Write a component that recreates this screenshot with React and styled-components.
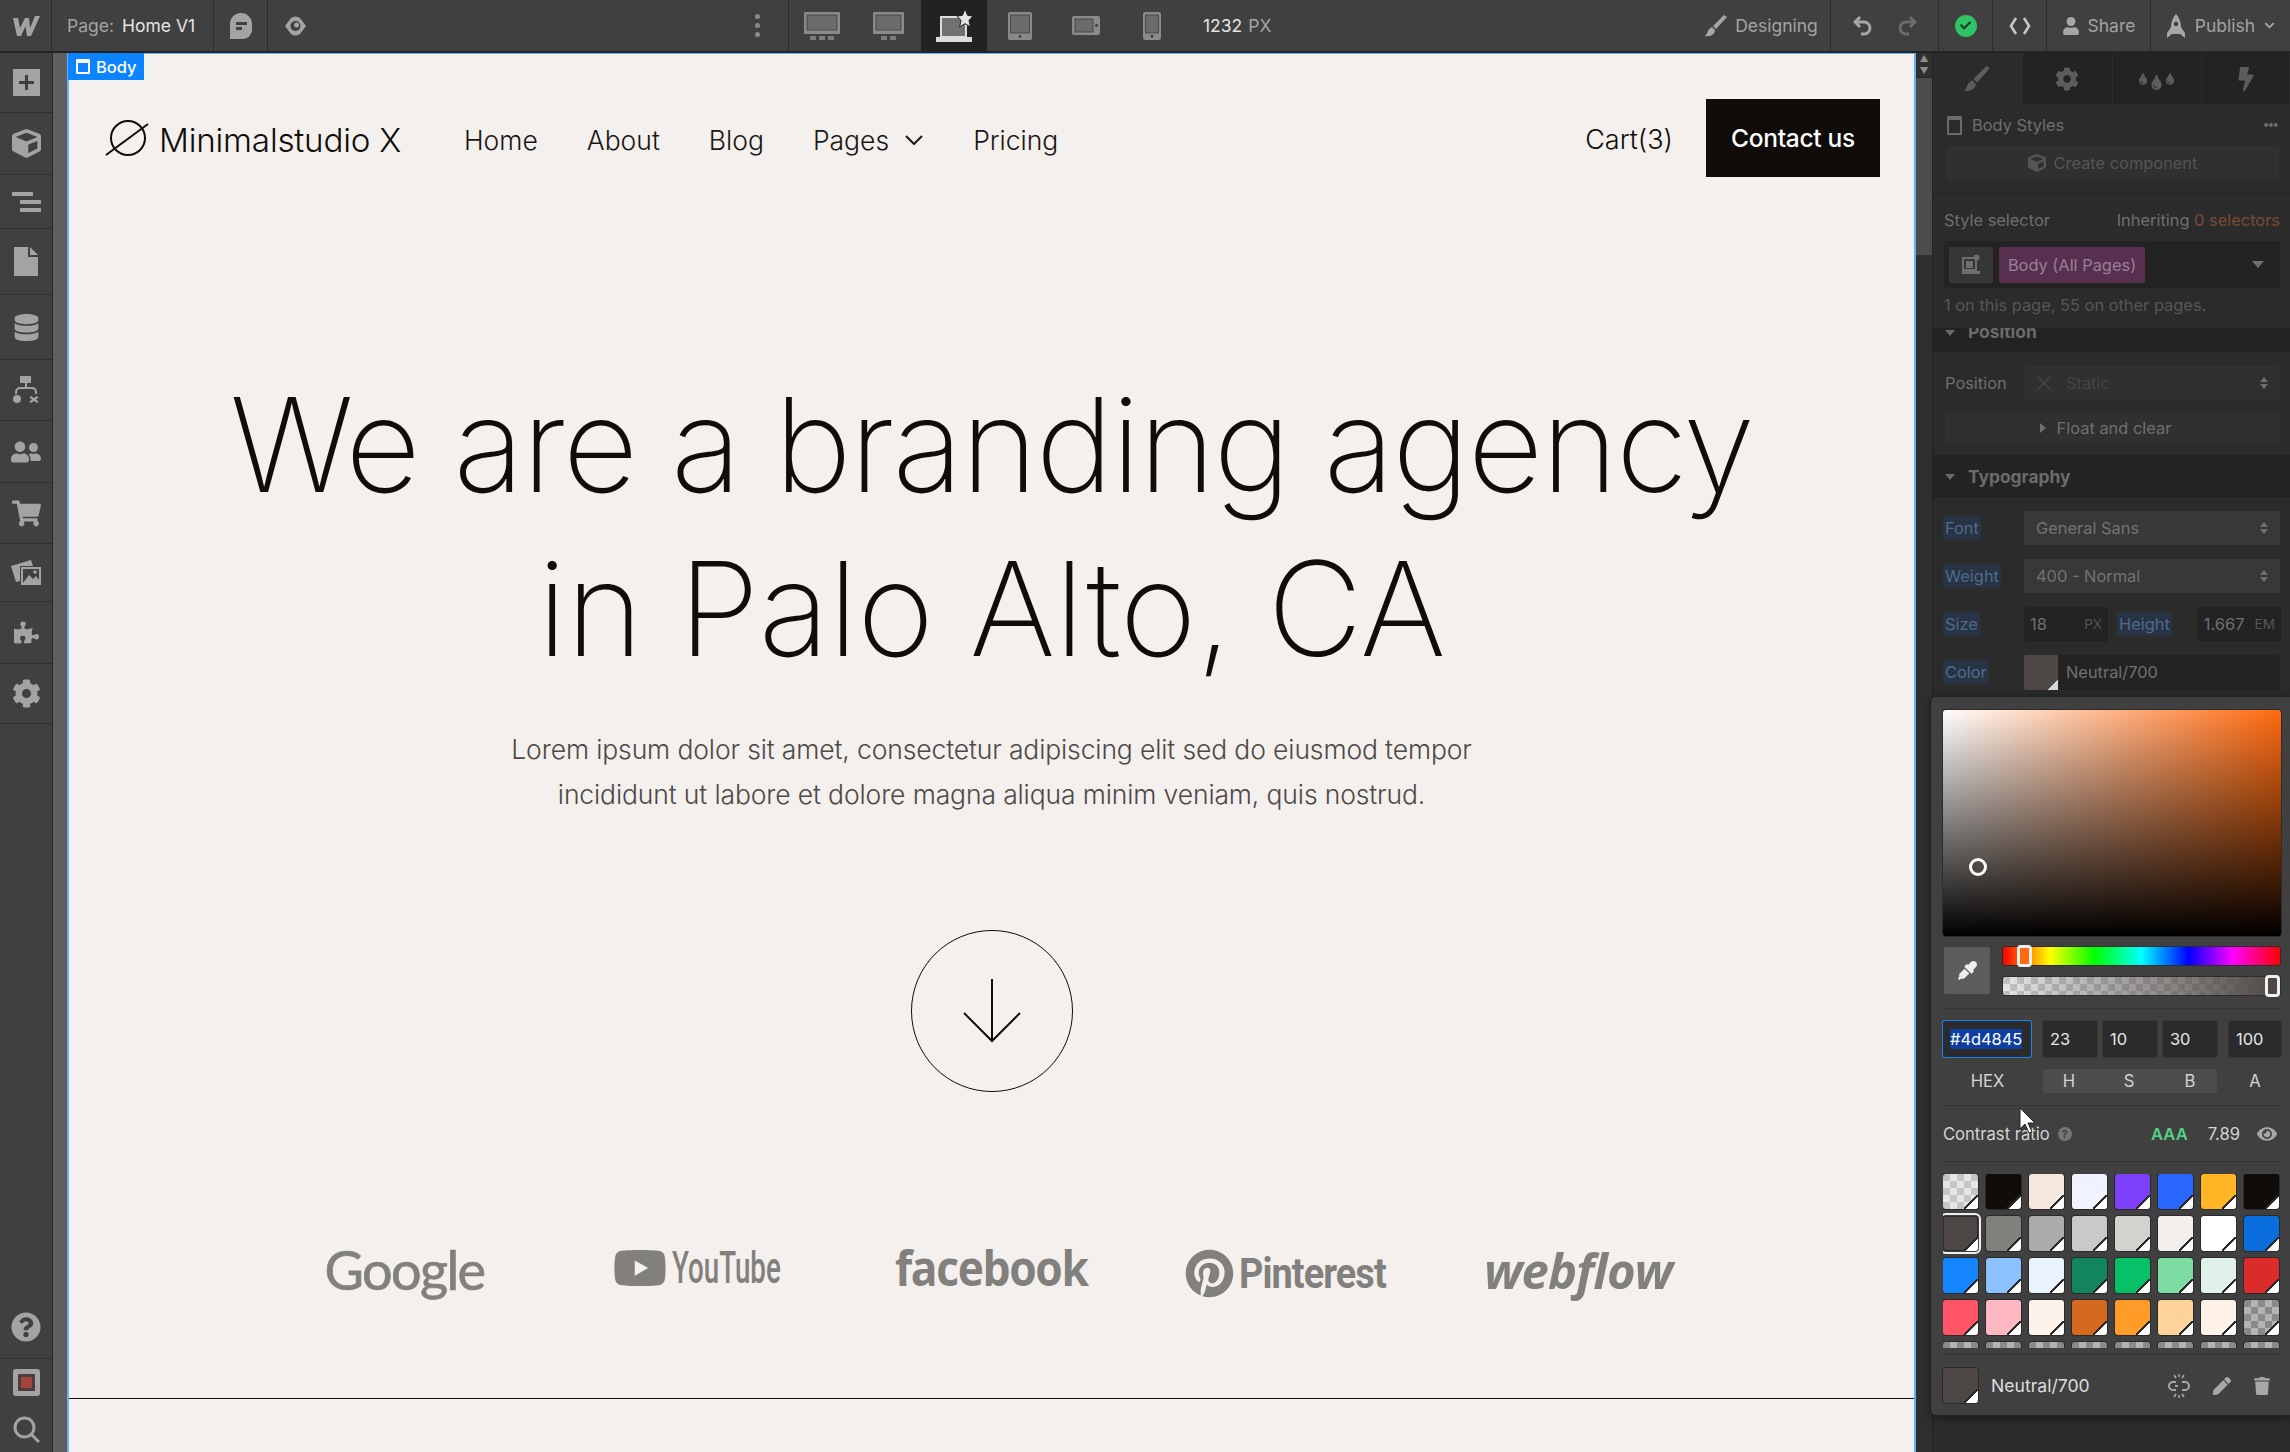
import React from "react";
import styled, { createGlobalStyle } from "styled-components";
import {
  FaCube,
  FaDatabase,
  FaUserFriends,
  FaShoppingCart,
  FaPuzzlePiece,
  FaCog,
  FaQuestionCircle,
  FaUser,
  FaEye,
  FaPen,
  FaTrash,
  FaTint,
  FaBolt,
  FaCheck,
  FaEyeDropper,
  FaYoutube,
  FaPinterest,
  FaChevronDown,
  FaEllipsisH,
} from "react-icons/fa";

const Global = createGlobalStyle`
  html, body { margin: 0; padding: 0; background: #2b2b2b; }
  body { font-family: Inter, "Liberation Sans", sans-serif; overflow: hidden; }
  * { box-sizing: border-box; }
`;

const Shell = styled.div`
  position: relative;
  width: 2290px;
  height: 1452px;
  overflow: hidden;
  display: flex;
  flex-direction: column;
`;

/* top bar */
const TopBar = styled.div`
  height: 53px;
  flex: none;
  display: flex;
  background: #404040;
  border-bottom: 2px solid #242424;
  color: #d9d9d9;
  font-size: 17.5px;
`;

const TopCell = styled.div`
  width: ${(p) => p.$w || "auto"};
  flex: none;
  height: 51px;
  display: flex;
  align-items: center;
  justify-content: ${(p) => p.$justify || "center"};
  gap: ${(p) => p.$gap || "8px"};
  padding-left: ${(p) => p.$pl || "0"};
  color: ${(p) => p.$color || "#a6a6a6"};
  background: ${(p) => (p.$active ? "#222222" : "transparent")};
  border-right: ${(p) => (p.$line ? "1px solid #2e2e2e" : "none")};
`;

const Spacer = styled.div`
  flex: ${(p) => (p.$w ? "none" : 1)};
  width: ${(p) => p.$w || "auto"};
`;

const Dim = styled.span`
  color: #a3a3a3;
`;

const Bright = styled.span`
  color: #e4e4e4;
`;

const Dot = styled.div`
  width: 5px;
  height: 5px;
  border-radius: 50%;
  background: #8a8a8a;
`;

const DotColumn = styled.div`
  display: flex;
  flex-direction: column;
  gap: 4px;
`;

const StatusDot = styled.div`
  width: 22px;
  height: 22px;
  border-radius: 50%;
  background: #2fc566;
  color: #1d3d28;
  display: flex;
  align-items: center;
  justify-content: center;
  font-size: 11px;
`;

/* main row */
const Main = styled.div`
  flex: 1;
  display: flex;
  min-height: 0;
`;

const Rail = styled.div`
  width: 53px;
  flex: none;
  background: #404040;
  border-right: 1px solid #2a2a2a;
  display: flex;
  flex-direction: column;
  color: #a3a3a3;
`;

const RailItem = styled.div`
  height: ${(p) => p.$h}px;
  flex: none;
  display: flex;
  align-items: center;
  justify-content: center;
  font-size: 24px;
  border-bottom: ${(p) => (p.$plain ? "none" : "1px solid #303030")};
  margin-top: ${(p) => (p.$push ? "auto" : "0")};
`;

const Strip = styled.div`
  width: 14px;
  flex: none;
  background: #5f5f5f;
`;

const Canvas = styled.div`
  width: 1849px;
  flex: none;
  position: relative;
  background: #f3f0ed;
  border-left: 2px solid #6aaef5;
  border-right: 2px solid #6aaef5;
  border-top: 1px solid #6aaef5;
  color: #0f0c09;
  display: flex;
  flex-direction: column;
  align-items: center;
  font-family: Inter, "Liberation Sans", sans-serif;
`;

const BodyTag = styled.div`
  position: absolute;
  left: -1px;
  top: -1px;
  width: 76px;
  height: 27px;
  background: #0d84ff;
  color: #fff;
  font-size: 16.5px;
  font-weight: 500;
  display: flex;
  align-items: center;
  gap: 6px;
  padding-left: 8px;
`;

const TagIcon = styled.div`
  width: 14px;
  height: 15px;
  flex: none;
  border: 2px solid #fff;
  border-top-width: 4px;
  border-radius: 1px;
`;

const Nav = styled.div`
  width: 100%;
  display: flex;
  align-items: center;
  padding: 45px 34px 0 36px;
  font-weight: 300;
  font-size: 26.5px;
`;

const Brand = styled.div`
  display: flex;
  align-items: center;
  gap: 10px;
  font-size: 33.2px;
  width: 359px;
  letter-spacing: -0.2px;
  line-height: 44px;
`;

const BrandText = styled.span`
  padding-top: 3px;
`;

const NavLink = styled.div`
  margin-right: ${(p) => p.$mr || "49px"};
  padding-top: 3px;
  display: flex;
  align-items: center;
  gap: 16px;
  color: #1a1613;
`;

const Cart = styled.div`
  margin-left: auto;
  margin-right: 33px;
  padding-top: 3px;
  font-size: 27px;
`;

const Contact = styled.div`
  width: 174px;
  height: 78px;
  background: #0f0c09;
  color: #fff;
  font-size: 24.5px;
  font-weight: 500;
  display: flex;
  align-items: center;
  justify-content: center;
  letter-spacing: -0.3px;
`;

const Title = styled.h1`
  margin: 186px 0 0;
  font-weight: 200;
  font-size: 131px;
  line-height: 164px;
  text-align: center;
  white-space: nowrap;
`;

const TitleLine = styled.div`
  letter-spacing: ${(p) => p.$ls};
`;

const Lead = styled.p`
  margin: 36px 0 0;
  color: #4d4845;
  font-weight: 300;
  font-size: 26.5px;
  line-height: 45px;
  letter-spacing: -0.13px;
  text-align: center;
  white-space: nowrap;
`;

const Circle = styled.div`
  margin-top: 113px;
  width: 162px;
  height: 162px;
  border-radius: 50%;
  border: 1px solid #0f0c09;
  display: flex;
  align-items: center;
  justify-content: center;
`;

const Logos = styled.div`
  margin-top: 157px;
  width: 1470px;
  height: 52px;
  display: grid;
  grid-template-columns: repeat(5, 1fr);
  color: #82807d;
`;

const LogoCell = styled.div`
  display: flex;
  justify-content: center;
  align-items: flex-start;
  gap: 5px;
  white-space: nowrap;
`;

const LogoText = styled.span`
  display: inline-block;
  width: ${(p) => p.$w}px;
  font-family: ${(p) => p.$family};
  font-size: ${(p) => p.$size}px;
  font-weight: ${(p) => p.$weight};
  font-style: ${(p) => (p.$italic ? "italic" : "normal")};
  line-height: ${(p) => p.$lh || 40}px;
  transform: scaleX(${(p) => p.$sx || 1});
  transform-origin: left center;
  letter-spacing: ${(p) => p.$ls || "0"};
  -webkit-text-stroke: ${(p) => p.$stroke || "0"} currentColor;
`;

const Rule = styled.div`
  margin-top: 97px;
  width: 100%;
  height: 1px;
  flex: none;
  background: #0f0c09;
`;

/* scrollbar */
const Scroll = styled.div`
  width: 16px;
  flex: none;
  background: #2f2f2f;
  display: flex;
  flex-direction: column;
  align-items: center;
  color: #8d8d8d;
  font-size: 9px;
`;

const ScrollThumb = styled.div`
  width: 100%;
  height: 178px;
  background: #4c4c4c;
  border-top: 1px solid #242424;
`;

const Arrow = styled.div`
  height: 12px;
  line-height: 12px;
`;

/* right panel, dimmed behind the picker */
const Panel = styled.div`
  flex: 1;
  background: #2b2b2b;
  border-left: 1px solid #242424;
  color: #6f6f6f;
  font-size: 16.4px;
  overflow: hidden;
  display: flex;
  flex-direction: column;
`;

const Tabs = styled.div`
  height: 51px;
  flex: none;
  display: flex;
  background: #232323;
`;

const Tab = styled.div`
  width: ${(p) => p.$w || "90px"};
  display: flex;
  align-items: center;
  justify-content: center;
  font-size: 24px;
  color: #5c5c5c;
  background: ${(p) => (p.$active ? "#2b2b2b" : "transparent")};
  border-right: 1px solid #2b2b2b;
`;

const LowDrop = styled.span`
  display: flex;
  margin-top: 7px;
`;

const StylesHead = styled.div`
  height: 42px;
  flex: none;
  display: flex;
  align-items: center;
  padding: 0 12px 0 14px;
  gap: 10px;
`;

const TagIconDim = styled.div`
  width: 15px;
  height: 19px;
  border: 2px solid #6b6b6b;
  border-top-width: 4px;
  border-radius: 1px;
`;

const CreateButton = styled.div`
  margin: 0 11px 13px 13px;
  height: 34px;
  flex: none;
  background: #303030;
  border-radius: 2px;
  display: flex;
  align-items: center;
  justify-content: center;
  gap: 8px;
  color: #555555;
`;

const Section = styled.div`
  flex: none;
  border-top: 1px solid #232323;
  padding: 15px 10px 0 11px;
  height: 135px;
`;

const SelectorHead = styled.div`
  display: flex;
  justify-content: space-between;
  margin-bottom: 10px;
  line-height: 22px;
`;

const Warn = styled.span`
  color: #7c4c35;
`;

const SelectorBox = styled.div`
  height: 47px;
  background: #232323;
  border-radius: 2px;
  display: flex;
  align-items: center;
  padding: 0 16px 0 5px;
  gap: 6px;
  color: #6f6f6f;
`;

const SelectorIcon = styled.div`
  width: 44px;
  height: 36px;
  background: #363636;
  border-radius: 2px;
  display: flex;
  align-items: center;
  justify-content: center;
  font-size: 16px;
`;

const Pill = styled.div`
  width: 146px;
  height: 36px;
  background: #57304f;
  color: #9a7f97;
  border-radius: 2px;
  display: flex;
  align-items: center;
  justify-content: center;
  white-space: nowrap;
`;

const Caret = styled.div`
  margin-left: auto;
  width: 0;
  height: 0;
  border-left: 6px solid transparent;
  border-right: 6px solid transparent;
  border-top: 7px solid #6f6f6f;
`;

const Note = styled.div`
  margin-top: 6px;
  color: #565656;
  line-height: 22px;
  white-space: nowrap;
`;

const SectionHead = styled.div`
  height: ${(p) => p.$h}px;
  flex: none;
  background: #232323;
  display: flex;
  align-items: ${(p) => (p.$clip ? "flex-start" : "center")};
  padding-left: 12px;
  gap: 13px;
  font-weight: 700;
  color: #6b6b6b;
  overflow: hidden;
  font-size: 17.4px;
`;

const ClipText = styled.span`
  line-height: 10px;
  margin-top: -1px;
`;

const HeadCaret = styled.div`
  width: 0;
  height: 0;
  flex: none;
  margin-top: ${(p) => p.$mt || "0"};
  border-left: 5.5px solid transparent;
  border-right: 5.5px solid transparent;
  border-top: 6px solid #6b6b6b;
`;

const Rows = styled.div`
  flex: none;
  padding: ${(p) => p.$pad};
  display: flex;
  flex-direction: column;
  gap: ${(p) => p.$gap || "14px"};
`;

const Row = styled.div`
  display: flex;
  align-items: center;
  height: ${(p) => p.$h || "34px"};
`;

const Label = styled.div`
  width: 79px;
  flex: none;
  display: flex;
`;

const BlueLabel = styled.span`
  background: #283443;
  color: #4f6a8c;
  padding: 0 2px;
  line-height: 24px;
  margin-left: ${(p) => p.$ml || "-2px"};
  margin-right: ${(p) => p.$mr || "0"};
`;

const Select = styled.div`
  flex: 1;
  height: 34px;
  background: ${(p) => (p.$faint ? "#303030" : "#383838")};
  border-radius: 2px;
  display: flex;
  align-items: center;
  padding: 0 12px;
  gap: 14px;
  color: ${(p) => (p.$faint ? "#444444" : "#737373")};
`;

const Stepper = styled.div`
  margin-left: auto;
  display: flex;
  flex-direction: column;
  gap: 2px;
`;

const StepUp = styled.div`
  width: 0;
  height: 0;
  border-left: 4px solid transparent;
  border-right: 4px solid transparent;
  border-bottom: 5px solid #707070;
`;

const StepDown = styled(StepUp)`
  border-bottom: none;
  border-top: 5px solid #707070;
`;

const FloatBar = styled.div`
  height: 30px;
  background: #303030;
  border-radius: 2px;
  display: flex;
  align-items: center;
  justify-content: center;
  gap: 11px;
  padding-right: 14px;
`;

const TriRight = styled.div`
  width: 0;
  height: 0;
  border-top: 5.5px solid transparent;
  border-bottom: 5.5px solid transparent;
  border-left: 6px solid #6f6f6f;
`;

const NumberBox = styled.div`
  width: ${(p) => p.$w};
  height: 35px;
  flex: none;
  background: #232323;
  border-radius: 2px;
  display: flex;
  align-items: center;
  justify-content: space-between;
  padding: 0 6px;
  color: #707070;
  margin-left: ${(p) => p.$ml || "0"};
`;

const Unit = styled.span`
  color: #555555;
  font-size: 13.5px;
`;

const ColorBar = styled.div`
  flex: 1;
  height: 35px;
  background: #232323;
  border-radius: 2px;
  display: flex;
  align-items: center;
  gap: 8px;
  color: #707070;
  overflow: hidden;
`;

const DimSwatch = styled.div`
  width: 34px;
  height: 35px;
  background: ${(p) => p.$color};
  position: relative;
  &::after {
    content: "";
    position: absolute;
    right: 0;
    bottom: 0;
    width: 10px;
    height: 10px;
    background: linear-gradient(135deg, transparent 50%, #d8d8d8 50%);
  }
`;

/* colour picker popover */
const Popover = styled.div`
  position: absolute;
  left: 1931px;
  top: 697px;
  width: 359px;
  height: 718px;
  background: #404040;
  border-radius: 5px 0 0 5px;
  box-shadow: 0 0 0 1px #222, 0 2px 10px rgba(0, 0, 0, 0.5);
  padding: 13px 9px 0 12px;
  color: #d9d9d9;
  font-size: 16.6px;
  display: flex;
  flex-direction: column;
`;

const Field = styled.div`
  position: relative;
  width: 338px;
  height: 226px;
  flex: none;
  border-radius: 3px;
  box-shadow: 0 0 0 1px #2c2c2c;
  background: linear-gradient(to top, #000, transparent),
    linear-gradient(to right, #fff, #ff6a10);
`;

const FieldHandle = styled.div`
  position: absolute;
  left: 26px;
  top: 148px;
  width: 18px;
  height: 18px;
  border-radius: 50%;
  border: 3px solid #fff;
  background: #4d4845;
`;

const Sliders = styled.div`
  margin-top: 11px;
  display: flex;
  gap: 13px;
  padding-left: 1px;
  flex: none;
`;

const Dropper = styled.div`
  width: 46px;
  height: 47px;
  background: #5c5c5c;
  border-radius: 2px;
  display: flex;
  align-items: center;
  justify-content: center;
  color: #eee;
  font-size: 19px;
`;

const SliderStack = styled.div`
  width: 277px;
  display: flex;
  flex-direction: column;
  gap: 12px;
`;

const checker = `repeating-conic-gradient(#e6e6e6 0% 25%, #c6c6c6 0% 50%) 0 0 / 14px 14px`;
const darkChecker = `repeating-conic-gradient(#b4b4b4 0% 25%, #8a8a8a 0% 50%) 0 0 / 14px 14px`;

const Hue = styled.div`
  position: relative;
  height: 18px;
  border-radius: 2px;
  box-shadow: 0 0 0 1px #2c2c2c;
  background: linear-gradient(
    to right,
    #f00 0%,
    #ff0 17%,
    #0f0 33%,
    #0ff 50%,
    #00f 67%,
    #f0f 83%,
    #f00 100%
  );
`;

const Alpha = styled.div`
  position: relative;
  height: 18px;
  border-radius: 2px;
  box-shadow: 0 0 0 1px #2c2c2c;
  background: linear-gradient(to right, rgba(77, 72, 69, 0), #4d4845),
    repeating-conic-gradient(#e6e6e6 0% 25%, #c2c2c2 0% 50%) 0 0 / 14px 14px;
`;

const SliderHandle = styled.div`
  position: absolute;
  left: ${(p) => p.$left}px;
  top: -2px;
  width: 15px;
  height: 22px;
  border: 3px solid #f0f0f0;
  border-radius: 4px;
  background: ${(p) => p.$color};
`;

const Divider = styled.div`
  height: 1px;
  flex: none;
  background: #343434;
  margin-top: ${(p) => p.$mt};
  width: 338px;
`;

const ValueRow = styled.div`
  margin-top: 12px;
  display: flex;
  flex: none;
  width: 338px;
`;

const ValueBox = styled.div`
  width: ${(p) => p.$w};
  height: 36px;
  margin-left: ${(p) => p.$ml || "0"};
  background: #2b2b2b;
  border-radius: 2px;
  display: flex;
  align-items: center;
  padding-left: 7px;
  color: #e6e6e6;
  font-size: 16.4px;
  box-shadow: ${(p) => (p.$focus ? "0 0 0 1px #1b86f2" : "0 0 0 1px #363636")};
`;

const Selection = styled.span`
  background: #0e3fa0;
  color: #fff;
`;

const ChannelRow = styled.div`
  margin-top: 12px;
  display: flex;
  flex: none;
  height: 24px;
  width: 338px;
  align-items: center;
  color: #d4d4d4;
`;

const ChannelHex = styled.div`
  width: 89px;
  text-align: center;
`;

const ChannelGroup = styled.div`
  margin-left: 11px;
  width: 174px;
  height: 24px;
  background: #4d4d4d;
  border-radius: 2px;
  display: grid;
  grid-template-columns: 52px 68px 54px;
  align-items: center;
  justify-items: center;
`;

const ChannelAlpha = styled.div`
  margin-left: 12px;
  width: 52px;
  text-align: center;
`;

const ContrastRow = styled.div`
  margin-top: 16px;
  height: 24px;
  display: flex;
  flex: none;
  align-items: center;
  width: 338px;
  color: #d4d4d4;
`;

const Help = styled.div`
  margin-left: 8px;
  width: 14px;
  height: 14px;
  border-radius: 50%;
  background: #757575;
  color: #404040;
  font-size: 11px;
  font-weight: 700;
  display: flex;
  align-items: center;
  justify-content: center;
`;

const Triple = styled.span`
  margin-left: auto;
  color: #53d086;
  font-weight: 600;
`;

const Ratio = styled.span`
  margin-left: 20px;
`;

const EyeIcon = styled.span`
  margin-left: 17px;
  margin-right: 4px;
  color: #a8a8a8;
  font-size: 20px;
  display: flex;
`;

const SwatchGrid = styled.div`
  margin-top: 12px;
  height: 174px;
  flex: none;
  width: 340px;
  overflow: hidden;
  display: grid;
  grid-template-columns: repeat(8, 35px);
  grid-auto-rows: 35px;
  column-gap: 8px;
  row-gap: 7px;
  padding-left: 0;
`;

const Swatch = styled.div`
  position: relative;
  width: 35px;
  height: 35px;
  border-radius: 3px;
  background: ${(p) => p.$color};
  box-shadow: ${(p) =>
    p.$selected ? "inset 0 0 0 1px #2a2a2a, 0 0 0 1px #404040, 0 0 0 3px #eeeeee" : "0 0 0 1px #2a2a2a"};
  overflow: hidden;
  &::after {
    content: "";
    position: absolute;
    right: 0;
    bottom: 0;
    width: 14px;
    height: 14px;
    background: linear-gradient(135deg, transparent 46%, #2a2a2a 46%, #2a2a2a 54%, #fff 54%);
  }
`;

const Footer = styled.div`
  margin-top: 13px;
  display: flex;
  align-items: center;
  width: 338px;
  flex: none;
`;

const FooterName = styled.div`
  margin-left: 13px;
  font-size: 17.6px;
  color: #dedede;
`;

const FooterIcons = styled.div`
  margin-left: auto;
  margin-right: 10px;
  display: flex;
  align-items: center;
  gap: 22px;
  color: #a8a8a8;
  font-size: 18px;
`;

const Cursor = styled.svg`
  position: absolute;
  left: 88px;
  top: 410px;
`;

const swatchRows = [
  [checker, "#0f0c09", "#f4e8de", "#f1f2ff", "#7f40fb", "#2965ff", "#ffb526", "#0f0c09"],
  ["#4d4845", "#82807d", "#ababab", "#c9c9c8", "#d2d2cf", "#f2efec", "#ffffff", "#0a6fdc"],
  ["#1485ff", "#8bc1ff", "#e8f3ff", "#13855c", "#06c167", "#7cdca1", "#dff1e8", "#dc2b2b"],
  ["#ff5566", "#ffb8c1", "#fdf3ea", "#d5691d", "#ff9b28", "#fdd39a", "#fef2e8", darkChecker],
  Array(8).fill(darkChecker),
];

const Logo = () => (
  <svg width="28" height="22" viewBox="0 0 28 22" fill="#a3a3a3">
    <path d="M1 3 L6 3 L8 13 L13 3 L17 3 L18 13 L23 1 L28 1 L19 21 L15 21 L13.5 11 L9 21 L5 21 Z" />
  </svg>
);

const Chat = () => (
  <svg width="22" height="26" viewBox="0 0 22 26">
    <path d="M0 26 L0 11 A11 11 0 0 1 22 11 L22 17 A9 9 0 0 1 13 26 Z" fill="#a3a3a3" />
    <rect x="6" y="9" width="11" height="3" fill="#404040" />
    <rect x="6" y="14" width="6" height="3" fill="#404040" />
  </svg>
);

const Preview = () => (
  <svg width="21" height="20" viewBox="0 0 21 20">
    <path d="M0 10 L6 2 Q10.5 -1 15 2 L21 10 L15 18 Q10.5 21 6 18 Z" fill="#a3a3a3" />
    <circle cx="10.5" cy="10" r="5" fill="#404040" />
    <circle cx="11.5" cy="9" r="2.5" fill="#a3a3a3" />
  </svg>
);

const Brush = ({ size = 22, color = "#a6a6a6" }) => (
  <svg width={size} height={size} viewBox="0 0 22 22" fill={color}>
    <path d="M19 0 L22 2 L11 14 L8 11 Z" />
    <path d="M7 12 L10 15 C10 19 6 22 0 21 C3 19 2 14 7 12 Z" />
  </svg>
);

const Turn = ({ flip, color }) => (
  <svg
    width="20"
    height="20"
    viewBox="0 0 20 20"
    fill="none"
    stroke={color}
    strokeWidth="3"
    style={{ transform: flip ? "scaleX(-1)" : "none" }}
  >
    <path d="M7 1 L2 6 L7 11" />
    <path d="M2 6 H11 A6 6 0 0 1 11 18 H8" />
  </svg>
);

const Rocket = () => (
  <svg width="20" height="24" viewBox="0 0 20 24" fill="#a6a6a6">
    <path d="M10 0 C13 3 15 8 15 13 L19 19 L19 24 L14 20 L6 20 L1 24 L1 19 L5 13 C5 8 7 3 10 0 Z" />
    <circle cx="10" cy="10" r="2.2" fill="#404040" />
  </svg>
);

const Device = ({ kind }) => {
  if (kind === "wide") {
    return (
      <svg width="36" height="32" viewBox="0 0 36 32">
        <rect x="0" y="2" width="36" height="22" rx="1" fill="#8a8a8a" />
        <rect x="3" y="5" width="30" height="15" fill="#6b6b6b" stroke="#4a4a4a" />
        <rect x="6" y="26" width="6" height="4" fill="#7d7d7d" />
        <rect x="15" y="26" width="6" height="4" fill="#7d7d7d" />
        <rect x="24" y="26" width="6" height="4" fill="#7d7d7d" />
      </svg>
    );
  }
  if (kind === "desk") {
    return (
      <svg width="31" height="32" viewBox="0 0 31 32">
        <rect x="0" y="2" width="31" height="22" rx="1" fill="#8a8a8a" />
        <rect x="3" y="5" width="25" height="15" fill="#6b6b6b" stroke="#4a4a4a" />
        <rect x="8" y="26" width="6" height="4" fill="#7d7d7d" />
        <rect x="17" y="26" width="6" height="4" fill="#7d7d7d" />
      </svg>
    );
  }
  if (kind === "laptop") {
    return (
      <svg width="37" height="34" viewBox="0 0 37 34">
        <rect x="5" y="8" width="25" height="20" fill="#717171" stroke="#dcdcdc" strokeWidth="2" />
        <rect x="0" y="28" width="36" height="5" fill="#dcdcdc" />
        <path
          d="M29 0 L31.6 6.4 L37 7 L33 11.4 L34.4 18 L29 14.6 L23.6 18 L25 11.4 L21 7 L26.4 6.4 Z"
          fill="#e4e4e4"
          stroke="#222"
        />
      </svg>
    );
  }
  if (kind === "tablet") {
    return (
      <svg width="24" height="28" viewBox="0 0 24 28">
        <rect width="24" height="28" rx="2" fill="#8a8a8a" />
        <rect x="2.5" y="3" width="19" height="18" fill="#6b6b6b" stroke="#4a4a4a" />
        <circle cx="12" cy="24.5" r="1.4" fill="#3f3f3f" />
      </svg>
    );
  }
  if (kind === "land") {
    return (
      <svg width="28" height="19" viewBox="0 0 28 19">
        <rect width="28" height="19" rx="2" fill="#8a8a8a" />
        <rect x="3" y="3" width="18" height="13" fill="#6b6b6b" stroke="#4a4a4a" />
        <circle cx="24.5" cy="9.5" r="1.4" fill="#3f3f3f" />
      </svg>
    );
  }
  return (
    <svg width="18" height="28" viewBox="0 0 18 28">
      <rect width="18" height="28" rx="2" fill="#8a8a8a" />
      <rect x="2.5" y="3" width="13" height="18" fill="#6b6b6b" stroke="#4a4a4a" />
      <circle cx="9" cy="24.5" r="1.4" fill="#3f3f3f" />
    </svg>
  );
};

const BaseIcon = () => (
  <svg width="18" height="21" viewBox="0 0 18 21" fill="#6f6f6f">
    <rect x="1" y="4" width="13" height="12" fill="none" stroke="#6f6f6f" strokeWidth="2" />
    <rect x="4" y="7" width="7" height="7" />
    <rect x="0" y="17" width="18" height="3" />
    <circle cx="14.5" cy="3.5" r="3" />
  </svg>
);

const AddIcon = () => (
  <svg width="27" height="27" viewBox="0 0 27 27">
    <rect width="27" height="27" rx="1" fill="#a3a3a3" />
    <path d="M12 6 h3 v6 h6 v3 h-6 v6 h-3 v-6 h-6 v-3 h6 z" fill="#404040" />
  </svg>
);

const NavigatorIcon = () => (
  <svg width="29" height="20" viewBox="0 0 29 20" fill="#a3a3a3">
    <rect x="0" y="0" width="21" height="4" />
    <rect x="8" y="8" width="21" height="4" />
    <rect x="8" y="16" width="21" height="4" />
  </svg>
);

const PageIcon = () => (
  <svg width="24" height="29" viewBox="0 0 24 29" fill="#a3a3a3">
    <path d="M0 0 H14 V10 H24 V29 H0 Z" />
    <path d="M16 0 L24 8 H16 Z" />
  </svg>
);

const LogicIcon = () => (
  <svg width="26" height="29" viewBox="0 0 26 29" fill="#a3a3a3">
    <rect x="7" y="0" width="11" height="7" />
    <path d="M12 7 h2 v4 h5 a5 5 0 0 1 5 5 v2 h-2 v-2 a3 3 0 0 0 -3 -3 h-12 a3 3 0 0 0 -3 3 v2 h-2 v-2 a5 5 0 0 1 5 -5 h5 z" />
    <circle cx="4" cy="23" r="4" />
    <path d="M18 20 l3 2 l3 -2 l1.5 1.5 l-2.5 2 l2.5 2 l-1.5 1.5 l-3 -2 l-3 2 l-1.5 -1.5 l2.5 -2 l-2.5 -2 z" />
  </svg>
);

const AssetsIcon = () => (
  <svg width="30" height="26" viewBox="0 0 30 26">
    <path d="M0 6 L20 0 L22 6 L9 6 V21 L5 22 Z" fill="#a3a3a3" />
    <rect x="10" y="7" width="20" height="18" fill="#a3a3a3" />
    <rect x="12" y="9" width="16" height="14" fill="#404040" />
    <path d="M12 23 L18 15 L22 19 L25 16 L28 20 V23 Z" fill="#a3a3a3" />
    <circle cx="24" cy="12" r="1.8" fill="#a3a3a3" />
  </svg>
);

const RecordIcon = () => (
  <svg width="27" height="27" viewBox="0 0 27 27">
    <rect width="27" height="27" rx="3" fill="#a3a3a3" />
    <rect x="5" y="5" width="17" height="17" fill="#4a4040" />
    <rect x="8" y="8" width="11" height="11" fill="#a8423f" />
  </svg>
);

const SearchIcon = () => (
  <svg width="27" height="27" viewBox="0 0 27 27" fill="none" stroke="#a3a3a3" strokeWidth="3">
    <circle cx="11.5" cy="11.5" r="9.5" />
    <path d="M18 18 L26 26" />
  </svg>
);

const Unlink = () => (
  <svg width="24" height="24" viewBox="0 0 24 24" fill="none" stroke="#a8a8a8" strokeWidth="2">
    <path d="M9 8 H6 a4 4 0 0 0 0 8 H9" />
    <path d="M15 8 H18 a4 4 0 0 1 0 8 H15" />
    <path d="M8 12 H11" />
    <path d="M7 1 L9 4 M12 0 V3 M17 1 L15 4 M7 23 L9 20 M12 24 V21 M17 23 L15 20" strokeWidth="1.5" />
  </svg>
);

const BrandMark = () => (
  <svg width="44" height="38" viewBox="0 0 44 38" fill="none" stroke="#0f0c09" strokeWidth="2">
    <circle cx="23" cy="19" r="17" />
    <path d="M1 36 L43 5" />
  </svg>
);

const DownArrow = () => (
  <svg width="60" height="64" viewBox="0 0 60 64" fill="none" stroke="#0f0c09" strokeWidth="2">
    <path d="M30 0 V62" />
    <path d="M2 34 L30 62 L58 34" />
  </svg>
);

const NavChevron = () => (
  <svg width="18" height="10" viewBox="0 0 18 10" fill="none" stroke="#1a1613" strokeWidth="2">
    <path d="M1 1 L9 9 L17 1" />
  </svg>
);

export default function App() {
  return (
    <Shell>
      <Global />
      <TopBar>
        <TopCell $w="52px" $line>
          <Logo />
        </TopCell>
        <TopCell $w="162px" $line $justify="flex-start" $pl="15px">
          <Dim>Page:</Dim>
          <Bright>Home V1</Bright>
        </TopCell>
        <TopCell $w="54px" $line>
          <Chat />
        </TopCell>
        <TopCell $w="54px">
          <Preview />
        </TopCell>
        <Spacer $w="419px" />
        <TopCell $w="48px" $line $justify="flex-start" $pl="14px">
          <DotColumn>
            <Dot />
            <Dot />
            <Dot />
          </DotColumn>
        </TopCell>
        <TopCell $w="66px">
          <Device kind="wide" />
        </TopCell>
        <TopCell $w="66px">
          <Device kind="desk" />
        </TopCell>
        <TopCell $w="66px" $active>
          <Device kind="laptop" />
        </TopCell>
        <TopCell $w="66px">
          <Device kind="tablet" />
        </TopCell>
        <TopCell $w="66px">
          <Device kind="land" />
        </TopCell>
        <TopCell $w="66px">
          <Device kind="phone" />
        </TopCell>
        <TopCell $pl="18px" $gap="6px">
          <Bright>1232</Bright>
          <Dim>PX</Dim>
        </TopCell>
        <Spacer />
        <TopCell $line $gap="8px" $w="138px">
          <Brush />
          <Dim>Designing</Dim>
        </TopCell>
        <TopCell $line $w="108px" $gap="24px">
          <Turn color="#a6a6a6" />
          <Turn flip color="#6c6c6c" />
        </TopCell>
        <TopCell $line $w="54px">
          <StatusDot>
            <FaCheck />
          </StatusDot>
        </TopCell>
        <TopCell $line $w="54px" $gap="5px">
          <svg width="22" height="20" viewBox="0 0 22 20" fill="none" stroke="#c4c4c4" strokeWidth="2.6">
            <path d="M7 2 L2 10 L7 18 M15 2 L20 10 L15 18" />
          </svg>
        </TopCell>
        <TopCell $line $w="104px">
          <FaUser size={18} />
          <Dim>Share</Dim>
        </TopCell>
        <TopCell $w="139px" $gap="9px">
          <Rocket />
          <Dim>Publish</Dim>
          <FaChevronDown size={11} />
        </TopCell>
      </TopBar>

      <Main>
        <Rail>
          <RailItem $h={60}>
            <AddIcon />
          </RailItem>
          <RailItem $h={62}>
            <FaCube size={29} />
          </RailItem>
          <RailItem $h={54}>
            <NavigatorIcon />
          </RailItem>
          <RailItem $h={66}>
            <PageIcon />
          </RailItem>
          <RailItem $h={65}>
            <FaDatabase size={27} />
          </RailItem>
          <RailItem $h={61}>
            <LogicIcon />
          </RailItem>
          <RailItem $h={62}>
            <FaUserFriends size={30} />
          </RailItem>
          <RailItem $h={61}>
            <FaShoppingCart size={29} />
          </RailItem>
          <RailItem $h={58}>
            <AssetsIcon />
          </RailItem>
          <RailItem $h={62}>
            <FaPuzzlePiece size={25} />
          </RailItem>
          <RailItem $h={60}>
            <FaCog size={29} />
          </RailItem>
          <RailItem $h={64} $push>
            <FaQuestionCircle size={30} />
          </RailItem>
          <RailItem $h={47} $plain>
            <RecordIcon />
          </RailItem>
          <RailItem $h={46} $plain>
            <SearchIcon />
          </RailItem>
        </Rail>
        <Strip />

        <Canvas>
          <BodyTag>
            <TagIcon />
            Body
          </BodyTag>
          <Nav>
            <Brand>
              <BrandMark />
              <BrandText>Minimalstudio X</BrandText>
            </Brand>
            <NavLink>Home</NavLink>
            <NavLink>About</NavLink>
            <NavLink>Blog</NavLink>
            <NavLink $mr="50px">
              Pages
              <NavChevron />
            </NavLink>
            <NavLink>Pricing</NavLink>
            <Cart>Cart(3)</Cart>
            <Contact>Contact us</Contact>
          </Nav>
          <Title>
            <TitleLine $ls="-2px">We are a branding agency</TitleLine>
            <TitleLine $ls="-0.7px">in Palo Alto, CA</TitleLine>
          </Title>
          <Lead>
            Lorem ipsum dolor sit amet, consectetur adipiscing elit sed do eiusmod tempor
            <br />
            incididunt ut labore et dolore magna aliqua minim veniam, quis nostrud.
          </Lead>
          <Circle>
            <DownArrow />
          </Circle>
          <Logos>
            <LogoCell>
              <LogoText $w={158} $family="Lato, sans-serif" $size={54} $weight={400} $lh={42} $ls="-1.6px" $stroke="0.7px">
                Google
              </LogoText>
            </LogoCell>
            <LogoCell>
              <FaYoutube size={54} style={{ marginTop: "-8px" }} />
              <LogoText $w={110} $family="Roboto, sans-serif" $size={44} $weight={500} $sx={0.63} $lh={38}>
                YouTube
              </LogoText>
            </LogoCell>
            <LogoCell>
              <LogoText $w={193} $family="'Open Sans', sans-serif" $size={48} $weight={700} $sx={0.925} $lh={38} $ls="-1.5px">
                facebook
              </LogoText>
            </LogoCell>
            <LogoCell>
              <FaPinterest size={49} />
              <LogoText $w={147} $family="Roboto, sans-serif" $size={42} $weight={700} $sx={0.9} $lh={50} $ls="-1px">
                Pinterest
              </LogoText>
            </LogoCell>
            <LogoCell>
              <LogoText $w={191} $family="'Open Sans', sans-serif" $size={49} $weight={700} $italic $lh={42} $ls="-1px">
                webflow
              </LogoText>
            </LogoCell>
          </Logos>
          <Rule />
        </Canvas>

        <Scroll>
          <Arrow>▲</Arrow>
          <Arrow>▼</Arrow>
          <ScrollThumb />
        </Scroll>

        <Panel>
          <Tabs>
            <Tab $active>
              <Brush size={26} color="#5c5c5c" />
            </Tab>
            <Tab>
              <FaCog />
            </Tab>
            <Tab>
              <FaTint size={12} />
              <LowDrop>
                <FaTint size={15} />
              </LowDrop>
              <FaTint size={12} />
            </Tab>
            <Tab $w="88px">
              <FaBolt />
            </Tab>
          </Tabs>
          <StylesHead>
            <TagIconDim />
            <span>Body Styles</span>
            <FaEllipsisH size={14} style={{ marginLeft: "auto" }} />
          </StylesHead>
          <CreateButton>
            <FaCube size={18} />
            Create component
          </CreateButton>
          <Section>
            <SelectorHead>
              <span>Style selector</span>
              <span>
                Inheriting <Warn>0 selectors</Warn>
              </span>
            </SelectorHead>
            <SelectorBox>
              <SelectorIcon>
                <BaseIcon />
              </SelectorIcon>
              <Pill>Body (All Pages)</Pill>
              <Caret />
            </SelectorBox>
            <Note>1 on this page, 55 on other pages.</Note>
          </Section>
          <SectionHead $h={24} $clip>
            <HeadCaret $mt="2px" />
            <ClipText>Position</ClipText>
          </SectionHead>
          <Rows $pad="14px 10px 12px 12px" $gap="13px">
            <Row>
              <Label>Position</Label>
              <Select $faint>
                <svg width="16" height="16" viewBox="0 0 16 16" stroke="#444" strokeWidth="1.5">
                  <path d="M0 0 L16 16 M16 0 L0 16" />
                </svg>
                Static
                <Stepper>
                  <StepUp />
                  <StepDown />
                </Stepper>
              </Select>
            </Row>
            <FloatBar>
              <TriRight />
              Float and clear
            </FloatBar>
          </Rows>
          <SectionHead $h={43}>
            <HeadCaret />
            Typography
          </SectionHead>
          <Rows $pad="13px 10px 0 12px" $gap="14px">
            <Row>
              <Label>
                <BlueLabel>Font</BlueLabel>
              </Label>
              <Select>
                General Sans
                <Stepper>
                  <StepUp />
                  <StepDown />
                </Stepper>
              </Select>
            </Row>
            <Row>
              <Label>
                <BlueLabel>Weight</BlueLabel>
              </Label>
              <Select>
                400 - Normal
                <Stepper>
                  <StepUp />
                  <StepDown />
                </Stepper>
              </Select>
            </Row>
            <Row>
              <Label>
                <BlueLabel>Size</BlueLabel>
              </Label>
              <NumberBox $w="84px">
                18<Unit>PX</Unit>
              </NumberBox>
              <BlueLabel $ml="9px" $mr="26px">
                Height
              </BlueLabel>
              <NumberBox $w="83px">
                1.667<Unit>EM</Unit>
              </NumberBox>
            </Row>
            <Row>
              <Label>
                <BlueLabel>Color</BlueLabel>
              </Label>
              <ColorBar>
                <DimSwatch $color="#4d4845" />
                Neutral/700
              </ColorBar>
            </Row>
          </Rows>
        </Panel>
      </Main>

      <Popover>
        <Field>
          <FieldHandle />
        </Field>
        <Sliders>
          <Dropper>
            <FaEyeDropper />
          </Dropper>
          <SliderStack>
            <Hue>
              <SliderHandle $left={14} $color="#ff6a10" />
            </Hue>
            <Alpha>
              <SliderHandle $left={262} $color="#4d4845" />
            </Alpha>
          </SliderStack>
        </Sliders>
        <Divider $mt="13px" />
        <ValueRow>
          <ValueBox $w="88px" $focus>
            <Selection>#4d4845</Selection>
          </ValueBox>
          <ValueBox $w="54px" $ml="12px">
            23
          </ValueBox>
          <ValueBox $w="54px" $ml="6px">
            10
          </ValueBox>
          <ValueBox $w="54px" $ml="6px">
            30
          </ValueBox>
          <ValueBox $w="52px" $ml="12px">
            100
          </ValueBox>
        </ValueRow>
        <ChannelRow>
          <ChannelHex>HEX</ChannelHex>
          <ChannelGroup>
            <span>H</span>
            <span>S</span>
            <span>B</span>
          </ChannelGroup>
          <ChannelAlpha>A</ChannelAlpha>
        </ChannelRow>
        <Divider $mt="12px" />
        <ContrastRow>
          Contrast ratio
          <Help>?</Help>
          <Triple>AAA</Triple>
          <Ratio>7.89</Ratio>
          <EyeIcon>
            <FaEye />
          </EyeIcon>
        </ContrastRow>
        <Divider $mt="15px" />
        <SwatchGrid>
          {swatchRows.flat().map((color, i) => (
            <Swatch key={i} $color={color} $selected={i === 8} />
          ))}
        </SwatchGrid>
        <Divider $mt="6px" />
        <Footer>
          <Swatch $color="#4d4845" />
          <FooterName>Neutral/700</FooterName>
          <FooterIcons>
            <Unlink />
            <FaPen />
            <FaTrash />
          </FooterIcons>
        </Footer>
        <Cursor width="18" height="28" viewBox="0 0 18 28">
          <path d="M1 1 L1 22 L6 17 L10 26 L13 25 L9 16 L16 16 Z" fill="#fff" stroke="#222" strokeWidth="1" />
        </Cursor>
      </Popover>
    </Shell>
  );
}
